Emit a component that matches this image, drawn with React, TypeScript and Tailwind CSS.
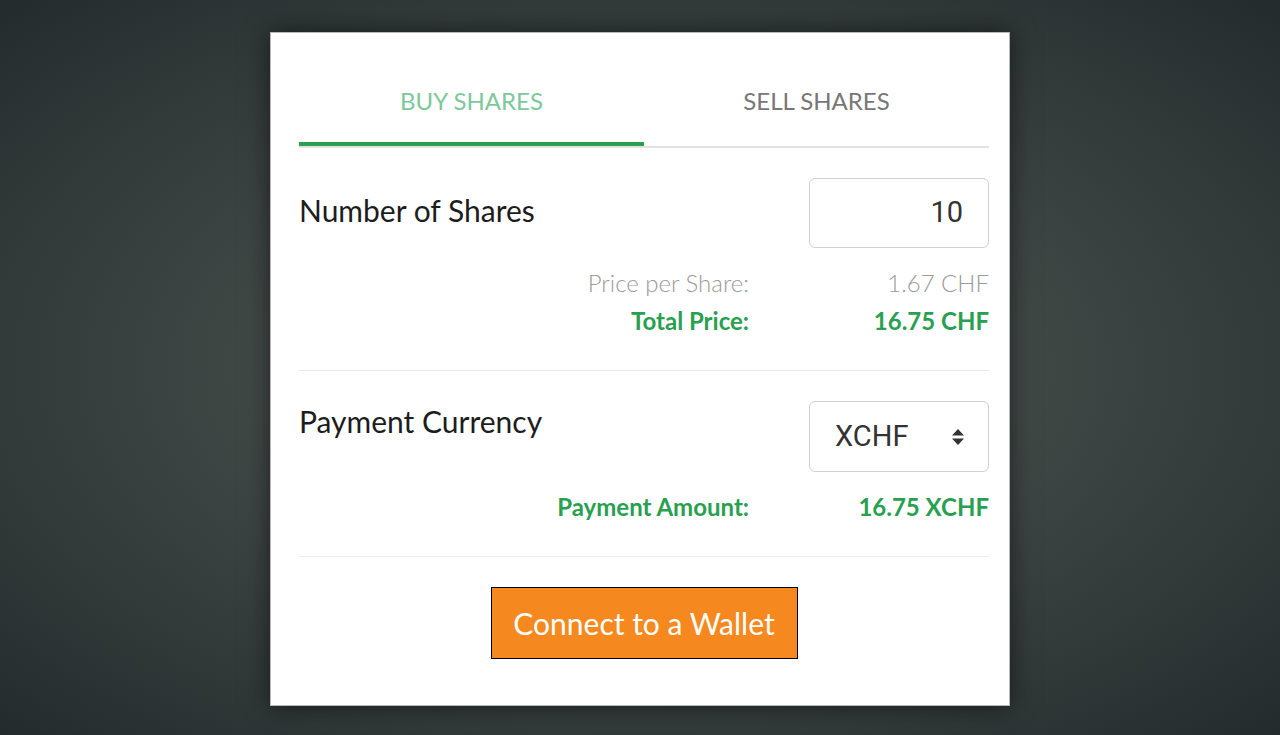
const green = "text-[#28a050]";

function Arrows() {
  return (
    <svg width="14" height="18" viewBox="0 0 14 18" className="shrink-0">
      <path d="M7 1 L13 7.5 H1 Z" fill="#333" />
      <path d="M7 17 L13 10.5 H1 Z" fill="#333" />
    </svg>
  );
}

function InfoRow({
  label,
  value,
  strong,
}: {
  label: string;
  value: string;
  strong?: boolean;
}) {
  const tone = strong ? `font-bold ${green}` : "font-light text-[#9a9a9a]";
  return (
    <div className="flex h-[38px] items-center text-[24px]">
      <div className={`flex-1 text-right ${tone}`}>{label}</div>
      <div className={`w-[240px] text-right ${tone}`}>{value}</div>
    </div>
  );
}

export default function App() {
  return (
    <div className="flex min-h-screen items-start justify-center bg-[radial-gradient(ellipse_at_center,#585f5d_0%,#3f4745_45%,#242b2d_100%)] pt-[32px] font-['Lato',sans-serif]">
      <div className="w-[740px] border border-[#b9b9b9] bg-white pl-[28px] pr-[20px] pt-[28px] pb-[46px] shadow-[0_0_24px_rgba(0,0,0,0.55)]">
        {/* tabs */}
        <div className="flex border-b-2 border-[#e2e2e2]">
          <button className="flex h-[85px] flex-1 items-center justify-center border-b-4 border-[#28a050] pb-[2px] text-[24px] uppercase text-[#7dc89b]">
            Buy Shares
          </button>
          <button className="flex h-[85px] flex-1 items-center justify-center border-b-4 border-transparent pb-[2px] text-[24px] uppercase text-[#777]">
            Sell Shares
          </button>
        </div>

        {/* number of shares */}
        <div className="border-b border-[#ebebeb] pt-[30px] pb-[30px]">
          <div className="flex items-start">
            <div className="flex-1 pt-[12px] text-[30px] leading-[40px] text-[#1d1d1d]">
              Number of Shares
            </div>
            <div className="flex h-[70px] w-[180px] items-center justify-end rounded-[6px] border border-[#d0d0d0] pr-[25px] font-['Roboto',sans-serif] text-[29px] text-[#333]">
              10
            </div>
          </div>
          <div className="mt-[16px]">
            <InfoRow label="Price per Share:" value="1.67 CHF" />
            <InfoRow label="Total Price:" value="16.75 CHF" strong />
          </div>
        </div>

        {/* payment currency */}
        <div className="border-b border-[#ebebeb] pt-[30px] pb-[30px]">
          <div className="flex items-start">
            <div className="flex-1 text-[30px] leading-[40px] text-[#1d1d1d]">
              Payment Currency
            </div>
            <div className="flex h-[71px] w-[180px] items-center justify-between rounded-[6px] border border-[#d0d0d0] pl-[25px] pr-[23px] font-['Roboto',sans-serif] text-[29px] text-[#333]">
              <span>XCHF</span>
              <Arrows />
            </div>
          </div>
          <div className="mt-[16px]">
            <InfoRow label="Payment Amount:" value="16.75 XCHF" strong />
          </div>
        </div>

        {/* action */}
        <div className="flex justify-center pt-[30px]">
          <button className="h-[72px] w-[307px] border border-black bg-[#f5891f] text-[30px] text-white">
            Connect to a Wallet
          </button>
        </div>
      </div>
    </div>
  );
}
